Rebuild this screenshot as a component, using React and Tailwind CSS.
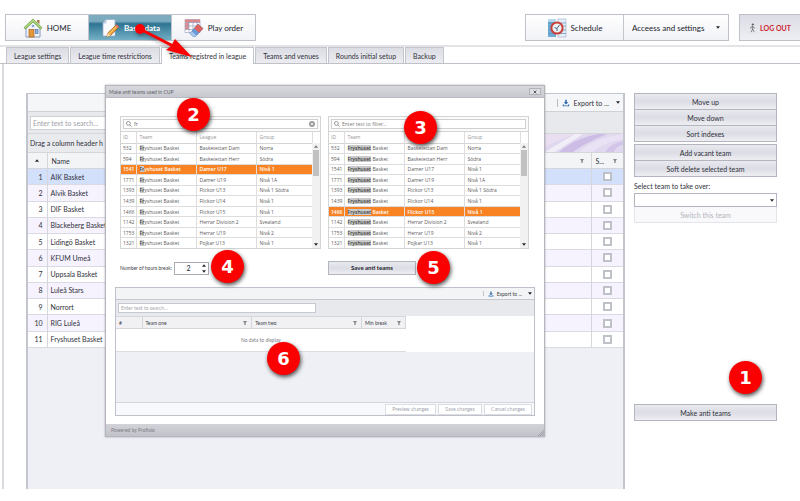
import React, { useState } from "react";
import clsx from "clsx";

const leagueTabs = [
  "League settings",
  "League time restrictions",
  "Teams registred in league",
  "Teams and venues",
  "Rounds initial setup",
  "Backup",
];

const leagueTeams = [
  "AIK Basket",
  "Alvik Basket",
  "DIF Basket",
  "Blackeberg Basket",
  "Lidingö Basket",
  "KFUM Umeå",
  "Uppsala Basket",
  "Luleå Stars",
  "Norrort",
  "RIG Luleå",
  "Fryshuset Basket",
];

const cupTeams = [
  { id: 532, league: "Basketettan Dam", group: "Norra" },
  { id: 594, league: "Basketettan Herr", group: "Södra" },
  { id: 1541, league: "Damer U17", group: "Nivå 1" },
  { id: 1771, league: "Damer U19", group: "Nivå 1A" },
  { id: 1393, league: "Flickor U13", group: "Nivå 1 Södra" },
  { id: 1439, league: "Flickor U14", group: "Nivå 1" },
  { id: 1466, league: "Flickor U15", group: "Nivå 1" },
  { id: 1142, league: "Herrar Division 2", group: "Svealand" },
  { id: 1753, league: "Herrar U19", group: "Nivå 2" },
  { id: 1321, league: "Pojkar U13", group: "Nivå 1" },
];

const HomeIcon = () => (
  <svg viewBox="0 0 20 20" className="w-5 h-5">
    <path d="M14 2h2.500v4L14 4z" fill="#a9794c" />
    <path d="M3 9.500 10 3l7 6.500V19H3z" fill="#f1f4fa" stroke="#6f86ad" strokeWidth=".8" />
    <path d="M1.500 10.500 10 2.500l8.500 8" fill="none" stroke="#6d9a45" strokeWidth="2.600" />
    <path d="M1.800 10 10 2.400l8.200 7.600" fill="none" stroke="#b4dc7c" strokeWidth="1.400" />
    <rect x="6" y="11.500" width="5" height="7.500" fill="#e39a3f" stroke="#a8621c" strokeWidth=".7" />
    <rect x="12.500" y="11.500" width="2.500" height="4" fill="#8fb5ea" stroke="#5276ae" strokeWidth=".7" />
    <circle cx="10" cy="8" r="1.300" fill="#7fa4d8" />
  </svg>
);

const EditIcon = () => (
  <svg viewBox="0 0 20 20" className="w-5 h-5">
    <path d="M6 1.500h9V18H3V5z" fill="#f8fafd" stroke="#9db1cc" strokeWidth=".8" />
    <path d="M6 1.500V5H3z" fill="#cfdcec" stroke="#9db1cc" strokeWidth=".6" />
    <path d="m16.500 6.500 2.500 2.300-8.500 8.700-3.700 1.500 1-4z" fill="#f0a13a" stroke="#955616" strokeWidth=".7" />
    <path d="m16.500 6.500 2.500 2.300-1.200 1.300-2.600-2.400z" fill="#d9717c" />
    <path d="m7.800 15 2.700 2.500-3.700 1.500z" fill="#f7dfb7" />
    <path d="m16 8.800-7.300 7.400" stroke="#ffd98c" strokeWidth=".9" />
  </svg>
);

const PlayOrderIcon = () => (
  <svg viewBox="0 0 20 20" className="w-5 h-5">
    <path d="M1 1.500h15v13H1z" fill="#fff" stroke="#9aa9c4" strokeWidth=".7" />
    <path d="M1 1.500h15v3H1z" fill="#e98383" />
    <path d="M1 4.500h4v7H1z" fill="#dc8e93" />
    <path d="M5 1.500v13M9 1.500v13M13 1.500v13M1 4.500h15M1 8h15M1 11.500h15" stroke="#9a9dbb" strokeWidth=".7" />
    <path d="m14 6 5 4.500-7.500 8H9L6 15.500z" fill="#6a9bd8" stroke="#446d9f" strokeWidth=".6" />
    <path d="m14 6 5 4.500-3.800 4.200-5.200-4.500z" fill="#e0625a" />
    <path d="M6 15.500 9 18.500h2.500l1-1-4.500-4z" fill="#a9c9ee" />
  </svg>
);

const ScheduleIcon = () => (
  <svg viewBox="0 0 20 20" className="w-5 h-5">
    <path d="M1 1h8v18H1z" fill="#6eabd6" />
    <path d="M1 1h8v3H1z" fill="#b5d8ec" />
    <path d="M11 1h8v18h-8z" fill="#e5edf6" stroke="#99b2d0" strokeWidth=".6" />
    <path d="M11 5h8M11 8h8M11 12h8M11 15.500h8M1 5h8M1 8h8M1 12h8M1 15.500h8" stroke="#5f8cba" strokeWidth=".7" />
    <circle cx="10" cy="10" r="5.600" fill="#edf2f6" stroke="#c9403a" strokeWidth="2" />
    <path d="m7.500 9.500 2.500 1L12.500 7M10 10.500v2.500" fill="none" stroke="#4b6380" strokeWidth="1" />
  </svg>
);

const WalkIcon = () => (
  <svg viewBox="0 0 10 14" className="w-[7px] h-[10px]" fill="none" stroke="#55585f" strokeWidth="1">
    <circle cx="5.500" cy="2" r="1" fill="#55585f" />
    <path d="M5.200 4v4.500L3 13M5.200 8.500 7.500 13M5 4.500 2.500 6v2M5.200 4.500 7 6.700l1.500.5" />
  </svg>
);

const ExportIcon = ({ className }) => (
  <svg viewBox="0 0 10 10" className={className} fill="#2f6cab">
    <path d="M4 1h2v3h2L5 7 2 4h2zM1 7h1.500v1h5V7H9v2H1z" />
  </svg>
);

const Caret = ({ className }) => (
  <svg viewBox="0 0 6 4" className={clsx("w-1 h-[3px]", className)} fill="#22242c">
    <path d="M0 0h6L3 4z" />
  </svg>
);

const FilterIcon = () => (
  <svg viewBox="0 0 6 6" className="w-1 h-1" fill="#85878f">
    <path d="M0 0h6L4 3v3H2V3z" />
  </svg>
);

const SearchIcon = () => (
  <svg viewBox="0 0 8 8" className="w-[6px] h-[6px] shrink-0" fill="none" stroke="#777" strokeWidth="1">
    <circle cx="3.200" cy="3.200" r="2.500" />
    <path d="m5 5 2.500 2.500" />
  </svg>
);

function Badge({ n, className }) {
  return (
    <div
      className={clsx(
        "absolute z-20 w-[33px] h-[33px] rounded-full bg-[#fb0000] flex items-center justify-center text-white font-bold text-[18px] leading-none font-['DejaVu_Sans',sans-serif] shadow-[1px_2px_4px_rgba(0,0,0,0.7)]",
        className
      )}
    >
      {n}
    </div>
  );
}

function SideButton({ children, className = "w-full h-[17px]" }) {
  return (
    <button
      className={clsx(
        "shrink-0 border border-[#b3b5c0] bg-linear-to-b from-[#e9eaee] via-[#dcdde5] to-[#eeeef2] flex items-center justify-center",
        className
      )}
    >
      {children}
    </button>
  );
}

function NavButton({ icon, label, active }) {
  return (
    <button
      className={clsx(
        "w-[83px] h-full flex items-center justify-center gap-1 border-r border-[#c3c5cc] last:border-r-0",
        active
          ? "text-white font-bold bg-linear-to-b from-[#7cabc0] from-25% via-[#2d7593] via-35% to-[#74b0c6]"
          : "text-[#22242c]"
      )}
    >
      {icon}
      {label}
    </button>
  );
}

function CupTable({ mark, label, filter, placeholder, selectedId, leagueTitle }) {
  const [text, setText] = useState(filter);
  const rest = "Fryshuset Basket".slice(mark.length);

  return (
    <div className="flex-1 border border-[#d4d4d4] text-[#5c5c5c] font-['Open_Sans','Noto_Sans',sans-serif]">
      <div className="h-[15px] flex items-center px-[2px] border-b border-[#d4d4d4] bg-[#fafafa]">
        <div className="w-full h-[10px] flex items-center gap-[2px] px-[2px] border border-[#d0d0d0] bg-white">
          <SearchIcon />
          <input
            aria-label={label}
            className="flex-1 min-w-0 outline-none placeholder:text-[#777]"
            value={text}
            placeholder={placeholder}
            onChange={(e) => setText(e.target.value)}
          />
          {text && (
            <button aria-label="Clear" onClick={() => setText("")}>
              <svg viewBox="0 0 8 8" className="w-[6px] h-[6px]">
                <circle cx="4" cy="4" r="4" fill="#9b9b9b" />
                <path d="m2.500 2.500 3 3m0-3-3 3" stroke="#fff" strokeWidth="1" />
              </svg>
            </button>
          )}
        </div>
      </div>
      <div className="relative">
        <table className="w-full h-[116px] table-fixed border-collapse text-left">
          <thead>
            <tr className="h-[11px] text-[#959595] border-b border-[#d4d4d4]">
              <th className="w-[15px] font-normal pl-[2px] border-r border-[#ddd]">ID</th>
              <th className="w-[60px] font-normal pl-[3px] border-r border-[#ddd]">Team</th>
              <th aria-label="League" className="w-[60px] font-normal pl-[3px] border-r border-[#ddd]">{leagueTitle}</th>
              <th className="font-normal pl-[3px] border-r border-[#ddd]">Group</th>
              <td className="w-2" />
            </tr>
          </thead>
          <tbody>
            {cupTeams.map((team) => {
              const selected = team.id === selectedId;
              return (
                <tr
                  key={team.id}
                  className={clsx("border-b border-[#ddd] last:border-b-0 whitespace-nowrap", selected && "text-white font-semibold")}
                >
                  <td className={clsx("pl-[2px] border-r border-[#ddd]", selected && "bg-[#f98322]")}>{team.id}</td>
                  <td className={clsx("pl-[3px] border-r border-[#ddd]", selected && "bg-[#f98322]")}>
                    <mark className="bg-[#cbcbcb] text-[#3d3d3d] font-semibold">{mark}</mark>
                    {rest}
                  </td>
                  <td className={clsx("pl-[3px] border-r border-[#ddd]", selected && "bg-[#f98322]")}>{team.league}</td>
                  <td className={clsx("pl-[3px]", selected && "bg-[#f98322]")}>{team.group}</td>
                  <td className="bg-[#f1f1f1]" />
                </tr>
              );
            })}
          </tbody>
        </table>
        <div className="absolute right-0 top-[11px] bottom-0 w-2 bg-[#f1f1f1] flex flex-col items-center pt-[2px] pb-[2px]">
          <Caret className="rotate-180 opacity-60" />
          <div className="w-[6px] h-[26px] mt-[2px] bg-[#c1c1c1]" />
          <Caret className="mt-auto" />
        </div>
      </div>
    </div>
  );
}

function AntiTeamsDialog() {
  const [hours, setHours] = useState(2);

  return (
    <div
      role="dialog"
      aria-label="Make anti teams used in CUP"
      className="absolute z-10 left-[105px] top-[85px] w-[440px] border border-[#b5b6bd] bg-white text-[5px] leading-[8px] text-[#3c3e48] shadow-[0_0_2px_rgba(0,0,0,0.3)]"
    >
      <div className="h-[12px] flex items-center justify-between pl-[3px] pr-[3px] bg-linear-to-b from-[#d8d9de] to-[#c8c9cf] border-b border-[#b9bac1]">
        <span className="text-[#5d5f6a]">Make anti teams used in CUP</span>
        <button aria-label="Close" className="w-[12px] h-[7px] border border-[#b0b1b8] bg-[#dedfe4] flex items-center justify-center">
          <svg viewBox="0 0 6 6" className="w-1 h-1" stroke="#44464f" strokeWidth="1.300">
            <path d="m1 1 4 4m0-4-4 4" />
          </svg>
        </button>
      </div>

      <div className="px-[9px] pt-[18px] pb-[8px]">
        <div className="flex gap-[7px] pl-[5px] pr-[6px]">
          <CupTable mark="Fr" label="Filter first team" filter="fr" leagueTitle="League" selectedId={1541} />
          <CupTable mark="Fryshuset" label="Filter second team" filter="" placeholder="Enter text to filter..." selectedId={1466} />
        </div>

        <div className="flex items-center pl-[5px] mt-[12px]">
          <label htmlFor="hours" className="w-[54px] whitespace-nowrap">Number of hours break:</label>
          <div className="w-[35px] h-[13px] flex items-center border border-[#a9abb5] pr-[2px]">
            <input
              id="hours"
              className="w-full min-w-0 text-center text-[7px] text-[#22242c] outline-none"
              value={hours}
              onChange={(e) => setHours(e.target.value)}
            />
            <div className="flex flex-col gap-[3px]">
              <button aria-label="More hours" onClick={() => setHours(Number(hours) + 1)}>
                <Caret className="block rotate-180" />
              </button>
              <button aria-label="Fewer hours" onClick={() => setHours(Number(hours) - 1)}>
                <Caret className="block" />
              </button>
            </div>
          </div>
          <SideButton className="ml-[119px] w-[88px] h-[14px] font-bold text-[6px] text-[#22242c]">Save anti teams</SideButton>
        </div>

        <div className="mt-[12px] border border-[#bfc1ca] bg-[#eff0f5]">
          <div className="h-[12px] flex items-center justify-end gap-1 pr-[2px] bg-[#f3f4f5] border-b border-[#c6c8d0]">
            <div className="w-px h-[5px] bg-[#c3c5cc]" />
            <button className="flex items-center gap-[3px]">
              <ExportIcon className="w-[6px] h-[6px]" />
              Export to ...
              <Caret className="ml-[3px]" />
            </button>
          </div>
          <div className="h-4 flex items-center px-[2px] bg-[#e8e9ed]">
            <input
              aria-label="Search anti teams"
              placeholder="Enter text to search..."
              className="w-[198px] h-[10px] px-[2px] bg-white border border-[#c6c8d0] outline-none placeholder:text-[#a5a7ae]"
            />
          </div>
          <div className="bg-white">
            <table className="w-[290px] table-fixed border-collapse text-left">
              <thead>
                <tr className="h-[12px] bg-[#f1f1f4] border-y border-[#d4d6dc]">
                  <th className="w-[26px] pl-[3px] font-normal border-r border-[#d4d6dc]">#</th>
                  {["Team one", "Team two", "Min break"].map((name) => (
                    <th key={name} className="font-normal pl-[3px] pr-1 border-r border-[#d4d6dc] last:w-[44px]">
                      <div className="flex items-center justify-between whitespace-nowrap">
                        {name}
                        <FilterIcon />
                      </div>
                    </th>
                  ))}
                </tr>
              </thead>
              <tbody>
                <tr className="h-[23px] border-b border-[#dcdde3]">
                  <td colSpan={4} className="text-center text-[#7b7d86]">No data to display</td>
                </tr>
              </tbody>
            </table>
          </div>
          <div className="mt-[50px] h-[13px] flex items-center justify-end gap-[2px] pr-[2px] border-t border-[#d4d6dc] bg-[#f8f9fc] text-[#a2a4ad]">
            <button className="w-[51px] h-[11px] border border-[#dcdde3] bg-white">Preview changes</button>
            <button className="w-[44px] h-[11px] border border-[#dcdde3] bg-white">Save changes</button>
            <button className="w-[48px] h-[11px] border border-[#dcdde3] bg-white">Cancel changes</button>
          </div>
        </div>
      </div>

      <div className="h-[12px] flex items-center justify-between pl-[5px] bg-linear-to-b from-[#d2d3d8] to-[#c2c3ca] text-[#7b7d88]">
        Powered by Profixio
        <svg viewBox="0 0 6 6" className="w-[6px] h-[6px] self-end" stroke="#8d8f98" strokeWidth=".7">
          <path d="M0 6 6 0M2 6l4-4M4 6l2-2" />
        </svg>
      </div>

      <Badge n={2} className="left-[71px] top-[12px]" />
      <Badge n={3} className="left-[298px] top-[25px]" />
      <Badge n={4} className="left-[105px] top-[164px]" />
      <Badge n={5} className="left-[311px] top-[165px]" />
      <Badge n={6} className="left-[161px] top-[256px]" />
    </div>
  );
}

function TeamsGrid() {
  return (
    <div className="flex-1 border-x-2 border-t border-[#c3c5cc] bg-[#eff0f5]">
      <div className="h-[18px] flex items-center justify-end gap-1 pr-[3px] bg-[#f5f6f7] border-b border-[#cfd1d7]">
        <div className="w-px h-2 bg-[#b9bbc3]" />
        <button className="flex items-center gap-1">
          <ExportIcon className="w-2 h-2" />
          Export to ...
          <Caret className="ml-[3px]" />
        </button>
      </div>
      <div className="h-[22px] flex items-center px-[2px] bg-[#e8e9ed] border-b border-[#d4d6dc]">
        <input
          aria-label="Search teams"
          placeholder="Enter text to search..."
          className="w-[200px] h-[14px] px-[2px] bg-white border border-[#cfd1d7] outline-none placeholder:text-[#9fa1a9]"
        />
      </div>
      <div className="h-[18px] flex items-center justify-between pl-[2px] bg-[#e9eaee]">
        <span className="w-[74px] overflow-hidden whitespace-nowrap">Drag a column header h</span>
        <svg viewBox="0 0 90 18" preserveAspectRatio="none" className="w-[90px] h-full">
          <path d="M0 0h90v18H0z" fill="#e0d8ee" />
          <path d="M0 18C20 10 32 2 44 0H0z" fill="#eadff0" />
          <path d="M12 18 42 0h8L22 18z" fill="#f1eef8" />
          <path d="M26 18C40 6 54 2 66 0h8C60 6 48 12 40 18z" fill="#cdbde6" />
          <path d="M46 18C56 8 74 2 90 0v5C76 8 66 12 60 18z" fill="#e9e2f5" />
          <path d="M72 18c4-6 10-9 18-11v4c-6 1-8 4-9 7z" fill="#d3c5ea" />
        </svg>
      </div>
      <table className="w-full h-[196px] table-fixed border-collapse text-left">
        <thead>
          <tr className="h-4 bg-[#f3f4f6] border-y border-[#d4d6dc]">
            <th className="w-[19px] border-r border-[#d4d6dc]">
              <Caret className="rotate-180 mx-auto" />
            </th>
            <th className="font-normal px-1 border-r border-[#d4d6dc]">
              <div className="flex items-center justify-between pr-[3px]">
                Name
                <FilterIcon />
              </div>
            </th>
            <th className="w-[32px] font-normal pl-1 pr-[6px]">
              <div className="flex items-center justify-between">
                S...
                <FilterIcon />
              </div>
            </th>
          </tr>
        </thead>
        <tbody>
          {leagueTeams.map((team, index) => (
            <tr
              key={team}
              className="border-b border-[#dadbe2] bg-white even:bg-[#f6f3fe] first:bg-[#d3e0fb]"
            >
              <td className="text-right pr-1 border-r border-[#d4d6dc]">{index + 1}</td>
              <td className="pl-[3px] border-r border-[#d4d6dc]">{team}</td>
              <td>
                <input
                  type="checkbox"
                  aria-label={`Select ${team}`}
                  className="appearance-none block mx-auto w-[9px] h-[9px] border-2 border-[#bfc1c9] bg-white checked:bg-[#2d7593]"
                />
              </td>
            </tr>
          ))}
        </tbody>
      </table>
    </div>
  );
}

export default function App() {
  const [tab, setTab] = useState("Teams registred in league");

  return (
    <div className="relative overflow-hidden min-h-screen bg-white text-[7px] leading-[10px] text-[#2f313b] font-['Lato','Open_Sans',sans-serif]">
      <header className="h-[47px] pt-[14px] pl-[5px] flex items-start border-b-2 border-[#e4e4e6] text-[8px]">
        <nav className="h-[27px] flex border border-[#bfc1c8] bg-linear-to-b from-white to-[#f1f2f6]">
          <NavButton icon={<HomeIcon />} label="HOME" />
          <NavButton icon={<EditIcon />} label="Basic data" active />
          <NavButton icon={<PlayOrderIcon />} label="Play order" />
        </nav>
        <div className="ml-auto h-[27px] flex border border-[#bfc1c8] bg-linear-to-b from-white to-[#f1f2f6] text-[#22242c]">
          <button className="w-[98px] flex items-center justify-center gap-1 border-r border-[#c3c5cc]">
            <ScheduleIcon />
            Schedule
          </button>
          <button className="w-[104px] flex items-center justify-between px-2">
            Acceess and settings
            <Caret />
          </button>
        </div>
        <button className="ml-[10px] w-[61px] h-[27px] flex items-center justify-center gap-1 border border-r-0 border-[#bfc1c8] bg-linear-to-b from-[#dcdde5] to-[#eeeff3] text-[7px] font-bold text-[#cf1f30]">
          <WalkIcon />
          LOG OUT
        </button>
      </header>

      <div className="h-[17px] pl-[6px] flex items-end gap-px border-b border-[#bfc1c8]">
        {leagueTabs.map((name) => (
          <button
            key={name}
            onClick={() => setTab(name)}
            className={clsx(
              "px-[7px] border-x border-t border-[#c3c5cc] whitespace-nowrap",
              tab === name ? "h-[17px] pb-px bg-white -mb-px" : "h-4 bg-linear-to-b from-[#dcdde4] to-[#ececf1]"
            )}
          >
            {name}
          </button>
        ))}
      </div>

      <main className="ml-[2px] mb-3 h-[425px] pl-[22px] pr-[23px] pt-[29px] flex gap-[9px] border-l-2 border-[#d8d9df]">
        <TeamsGrid />
        <aside className="w-[143px] flex flex-col">
          <SideButton>Move up</SideButton>
          <SideButton className="w-full h-[17px] -mt-px">Move down</SideButton>
          <SideButton className="w-full h-[17px] -mt-px">Sort indexes</SideButton>
          <SideButton className="w-full h-[17px] mt-[2px]">Add vacant team</SideButton>
          <SideButton className="w-full h-[17px] -mt-px">Soft delete selected team</SideButton>
          <label htmlFor="takeover" className="mt-1 mb-[2px]">Select team to take over:</label>
          <div className="relative">
            <select id="takeover" className="appearance-none w-full h-[14px] border border-[#b3b5c0] bg-white block">
              <option></option>
            </select>
            <Caret className="absolute right-[3px] top-[6px] pointer-events-none" />
          </div>
          <button className="h-4 border border-t-0 border-[#e4e5ea] bg-[#f9f9fb] text-[#b1b3bb]">Switch this team</button>
          <div className="relative mt-[181px]">
            <SideButton>Make anti teams</SideButton>
            <Badge n={1} className="right-[15px] -top-[43px]" />
          </div>
        </aside>
      </main>

      <AntiTeamsDialog />

      <svg viewBox="0 0 70 45" className="absolute z-20 left-[130px] top-[20px] w-[70px] h-[45px] drop-shadow-[1px_2px_2px_rgba(0,0,0,0.4)]">
        <circle cx="10" cy="9" r="5" fill="#fb0000" />
        <path d="m10 9 33 17" stroke="#fb0000" strokeWidth="3" />
        <path d="m62 37-26-7 5-4 4-7z" fill="#fb0000" />
      </svg>
    </div>
  );
}
